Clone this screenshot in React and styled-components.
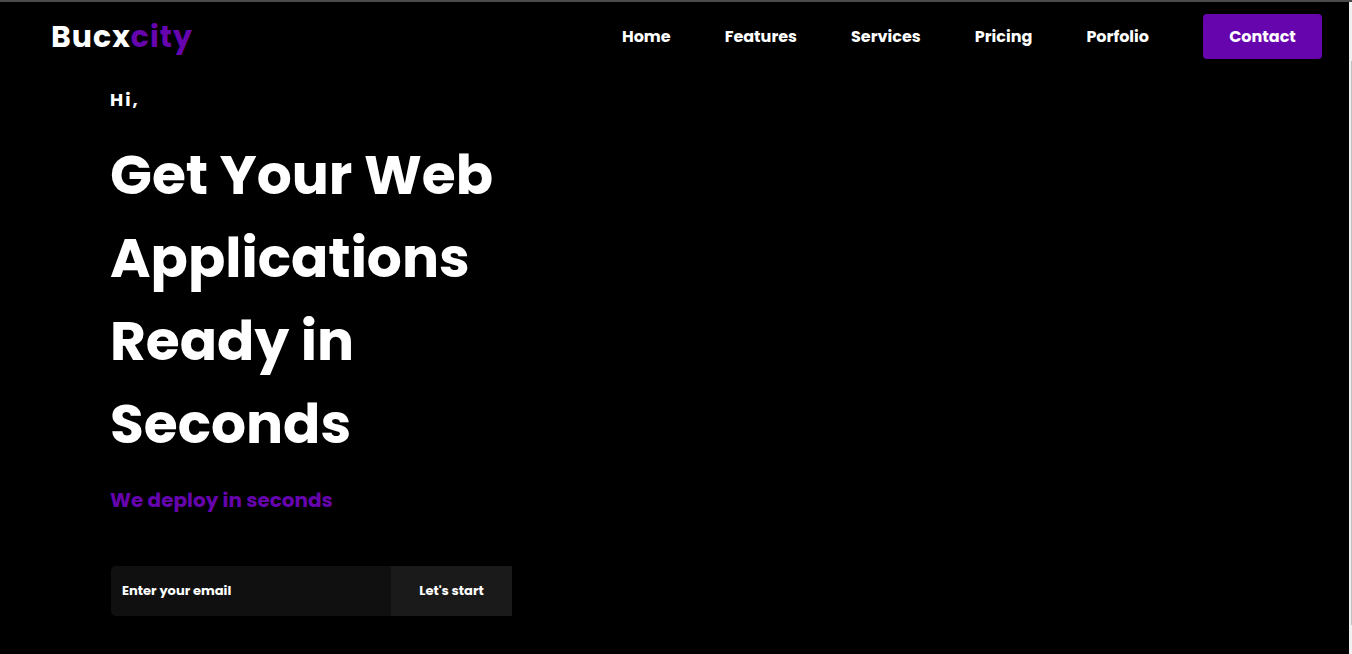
import React from "react";
import styled, { createGlobalStyle } from "styled-components";

const GlobalStyle = createGlobalStyle`
  *, *::before, *::after { box-sizing: border-box; }
  body {
    margin: 0;
    background: #000;
    color: #fff;
    font-family: Poppins, Inter, "Liberation Sans", sans-serif;
  }
`;

const Page = styled.div`
  display: grid;
  grid-template-columns: 1fr 3px;
  min-height: 100vh;
  border-top: 2px solid #4b4b4b;
`;

const Content = styled.div`
  min-width: 0;
`;

const ScrollTrack = styled.div`
  padding: 59px 0 29px 2px;
  background: #f1f1f1;
  display: flex;
`;

const ScrollThumb = styled.div`
  flex: 1;
  background: #c1c1c1;
`;

const Header = styled.header`
  display: flex;
  align-items: center;
  justify-content: space-between;
  padding: 12px 27px 0 51px;
`;

const Logo = styled.a`
  color: #fff;
  font-size: 30px;
  line-height: 45px;
  font-weight: 700;
  letter-spacing: 1px;
  text-decoration: none;
`;

const LogoAccent = styled.span`
  color: #6604ae;
`;

const Nav = styled.nav`
  display: flex;
  align-items: center;
  gap: 54px;
`;

const NavLink = styled.a`
  color: #fff;
  font-size: 16px;
  line-height: 24px;
  font-weight: 700;
  text-decoration: none;
`;

const ContactButton = styled.button`
  width: 119px;
  height: 45px;
  border: 0;
  border-radius: 4px;
  background: #6604ae;
  color: #fff;
  font: inherit;
  font-size: 16px;
  font-weight: 700;
`;

const Hero = styled.main`
  padding: 28px 0 38px 110px;
`;

const Greeting = styled.p`
  margin: 0;
  font-size: 18px;
  line-height: 25px;
  font-weight: 700;
  letter-spacing: 2px;
`;

const Title = styled.h1`
  max-width: 402px;
  margin: 21px 0 20px;
  font-size: 55px;
  line-height: 83px;
  font-weight: 700;
`;

const Tagline = styled.p`
  margin: 0 0 51px;
  color: #6604ae;
  font-size: 20px;
  line-height: 30px;
  font-weight: 700;
`;

const SignupForm = styled.form`
  display: flex;
  height: 50px;
  max-width: 402px;
  padding-left: 1px;
`;

const EmailInput = styled.input`
  flex: 1;
  min-width: 0;
  padding: 0 11px;
  border: 0;
  border-radius: 5px 0 0 5px;
  background: #101010;
  color: #fff;
  font: inherit;
  font-size: 13px;
  font-weight: 700;

  &::placeholder {
    color: #fff;
    opacity: 1;
  }
`;

const StartButton = styled.button`
  width: 121px;
  padding: 0;
  border: 0;
  background: #1a1a1a;
  color: #fff;
  font: inherit;
  font-size: 13px;
  font-weight: 700;
`;

const links = ["Home", "Features", "Services", "Pricing", "Porfolio"];

export default function App() {
  return (
    <>
      <GlobalStyle />
      <Page>
        <Content>
          <Header>
            <Logo href="#home">
              Bucx<LogoAccent>city</LogoAccent>
            </Logo>
            <Nav>
              {links.map((label) => (
                <NavLink key={label} href={`#${label.toLowerCase()}`}>
                  {label}
                </NavLink>
              ))}
              <ContactButton type="button">Contact</ContactButton>
            </Nav>
          </Header>
          <Hero>
            <Greeting>Hi,</Greeting>
            <Title>Get Your Web Applications Ready in Seconds</Title>
            <Tagline>We deploy in seconds</Tagline>
            <SignupForm onSubmit={(event) => event.preventDefault()}>
              <EmailInput
                type="email"
                aria-label="Email"
                placeholder="Enter your email"
              />
              <StartButton type="submit">Let's start</StartButton>
            </SignupForm>
          </Hero>
        </Content>
        <ScrollTrack aria-hidden="true">
          <ScrollThumb />
        </ScrollTrack>
      </Page>
    </>
  );
}
